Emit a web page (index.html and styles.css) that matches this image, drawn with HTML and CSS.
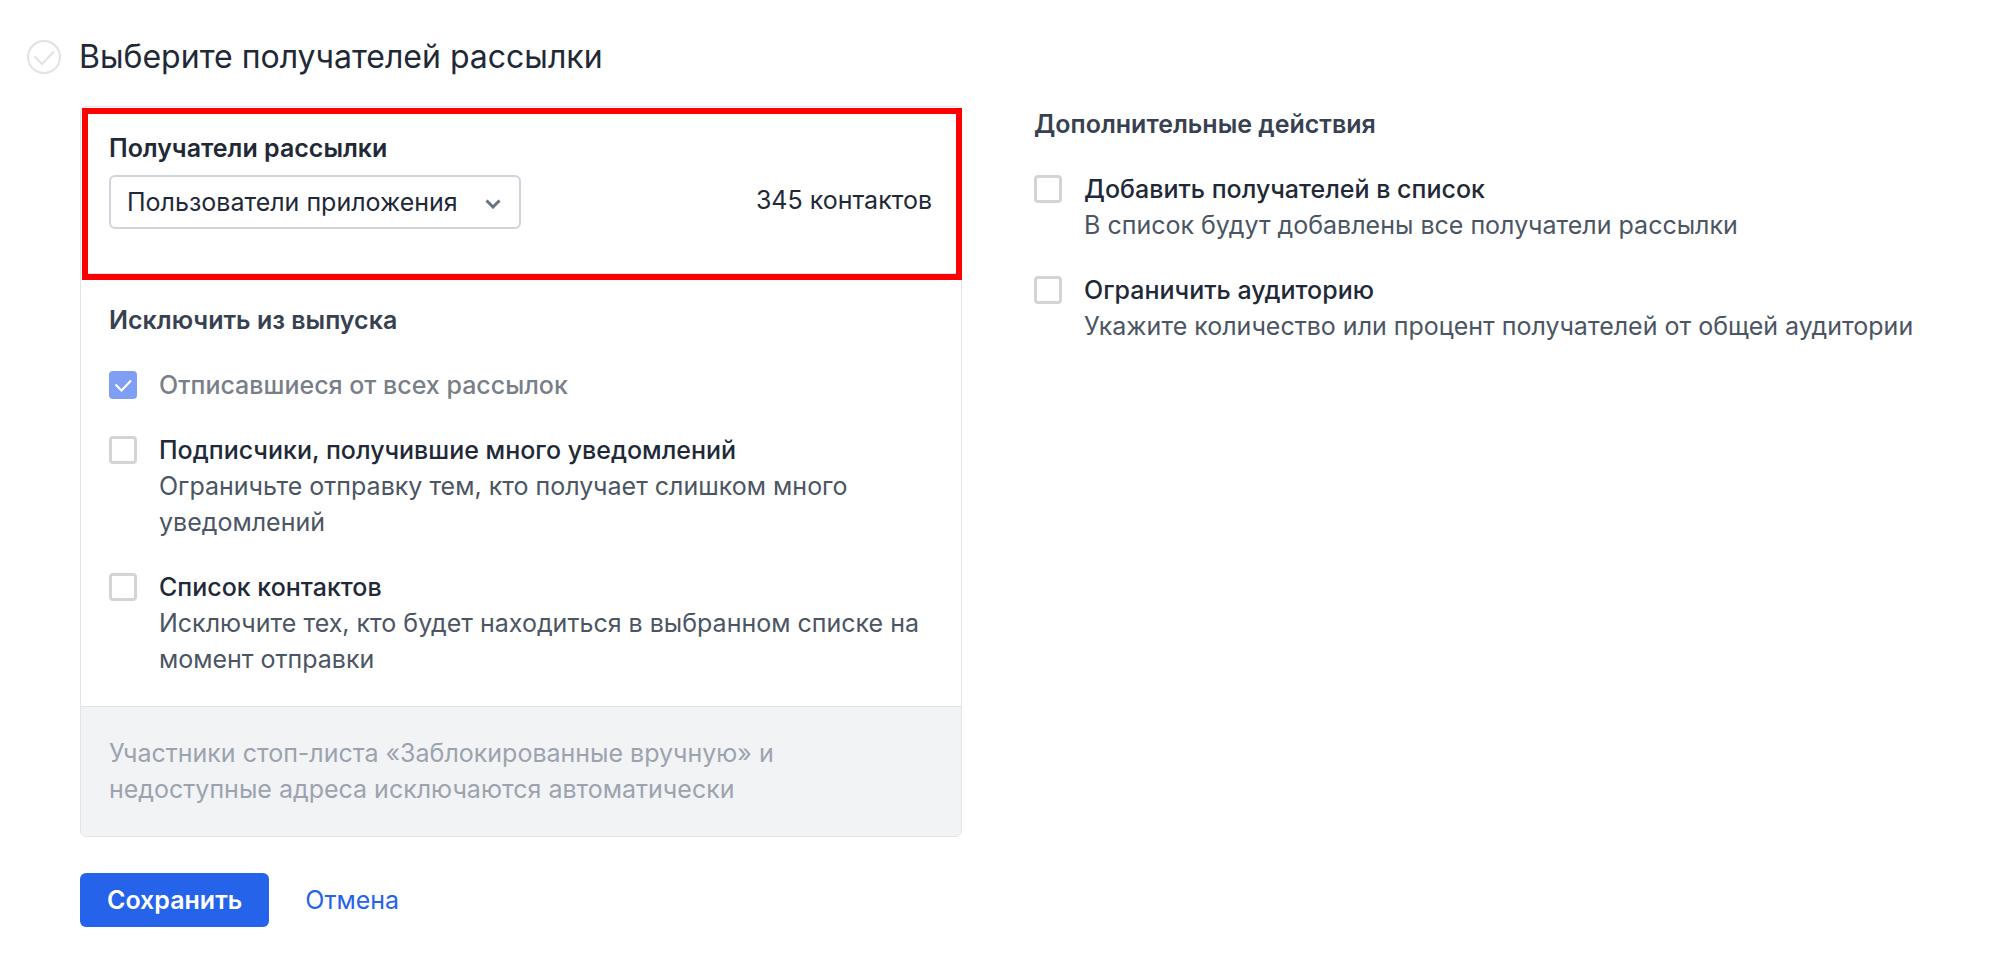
FILE: index.html
```html
<!DOCTYPE html>
<html lang="ru">
<head>
    <meta charset="UTF-8">
    <meta name="viewport" content="width=device-width, initial-scale=1.0">
    <title>Выберите получателей рассылки</title>
    <link rel="stylesheet" href="styles.css">
</head>
<body>
    <header class="step-header">
        <svg class="step-icon" viewBox="0 0 34 34" fill="none" stroke="#e2e2e2" stroke-width="2">
            <circle cx="17" cy="17" r="16"/>
            <path d="M7.500 16.500l7.500 7.500 12-12.500"/>
        </svg>
        <h1>Выберите получателей рассылки</h1>
    </header>
    <form class="step-form">
        <div class="columns">
            <div class="card">
                <section class="recipients">
                    <label class="field-label" for="segment">Получатели рассылки</label>
                    <div class="recipients-row">
                        <div class="select-box">
                            <select id="segment">
                                <option>Пользователи приложения</option>
                            </select>
                            <svg class="chevron" viewBox="0 0 16 10" fill="none" stroke="#6b7280" stroke-width="3">
                                <path d="M1.500 1.500l6.500 6.500 6.500-6.500"/>
                            </svg>
                        </div>
                        <span class="count">345 контактов</span>
                    </div>
                </section>
                <section class="exclude">
                    <h2>Исключить из выпуска</h2>
                    <div class="option disabled">
                        <input type="checkbox" id="unsubscribed" checked disabled>
                        <div>
                            <label for="unsubscribed">Отписавшиеся от всех рассылок</label>
                        </div>
                        <svg class="tick" viewBox="0 0 28 28" fill="none" stroke="#fff" stroke-width="2">
                            <path d="M6.500 13.500l6 6 9.500-10"/>
                        </svg>
                    </div>
                    <div class="option">
                        <input type="checkbox" id="frequent">
                        <div>
                            <label for="frequent">Подписчики, получившие много уведомлений</label>
                            <p>Ограничьте отправку тем, кто получает слишком много уведомлений</p>
                        </div>
                    </div>
                    <div class="option">
                        <input type="checkbox" id="contact-list">
                        <div>
                            <label for="contact-list">Список контактов</label>
                            <p>Исключите тех, кто будет находиться в выбранном списке на момент отправки</p>
                        </div>
                    </div>
                </section>
                <footer class="card-note">
                    <p>Участники стоп-листа «Заблокированные вручную» и недоступные адреса исключаются автоматически</p>
                </footer>
            </div>
            <section class="extra">
                <h2>Дополнительные действия</h2>
                <div class="option">
                    <input type="checkbox" id="add-to-list">
                    <div>
                        <label for="add-to-list">Добавить получателей в список</label>
                        <p>В список будут добавлены все получатели рассылки</p>
                    </div>
                </div>
                <div class="option">
                    <input type="checkbox" id="limit">
                    <div>
                        <label for="limit">Ограничить аудиторию</label>
                        <p>Укажите количество или процент получателей от общей аудитории</p>
                    </div>
                </div>
            </section>
        </div>
        <div class="actions">
            <button type="submit" class="save">Сохранить</button>
            <a href="#" class="cancel">Отмена</a>
        </div>
    </form>
</body>
</html>
```
FILE: styles.css
```css
* {
    box-sizing: border-box;
}
body {
    margin: 0;
    padding: 36px 28px 36px 27px;
    font-family: Inter, "Liberation Sans", sans-serif;
    font-size: 25px;
    line-height: 36px;
    color: #1f2937;
    background: #fff;
}
h1, h2, p {
    margin: 0;
}
h1 {
    font-size: 32px;
    line-height: 42px;
    font-weight: 400;
}
h2 {
    font-size: 25px;
    line-height: 36px;
    font-weight: 600;
    color: #374151;
}
.step-header {
    display: flex;
    align-items: center;
    gap: 18px;
    margin-bottom: 28px;
}
.step-icon {
    width: 34px;
    height: 34px;
    flex: none;
}
.step-form {
    padding-left: 53px;
}
.columns {
    display: grid;
    grid-template-columns: 13fr 14fr;
    gap: 72px;
    align-items: start;
}
.card {
    border: 1px solid #e2e4e8;
    border-radius: 6px;
}
.recipients {
    position: relative;
    padding: 23px 29px 44px 28px;
    border-bottom: 1px solid #e2e4e8;
}
/* red frame laid over the recipients block */
.recipients::after {
    content: "";
    position: absolute;
    top: 1px;
    right: -1px;
    bottom: -7px;
    left: 1px;
    border: 6px solid #f00;
    pointer-events: none;
}
.field-label {
    display: block;
    margin-bottom: 9px;
    font-weight: 600;
}
.recipients-row {
    display: flex;
    justify-content: space-between;
}
.select-box {
    position: relative;
}
.select-box select {
    display: block;
    width: 412px;
    height: 54px;
    padding: 0 50px 0 16px;
    border: 2px solid #d1d5db;
    border-radius: 6px;
    background: #fff;
    color: inherit;
    font: inherit;
    appearance: none;
}
.chevron {
    position: absolute;
    top: 24px;
    right: 20px;
    width: 16px;
    height: 10px;
    pointer-events: none;
}
.count {
    line-height: 50px;
}
.exclude, .extra {
    display: flex;
    flex-direction: column;
    gap: 29px;
}
.exclude {
    padding: 28px 28px 29px;
}
.option {
    position: relative;
    display: flex;
    gap: 22px;
}
.option input {
    appearance: none;
    flex: none;
    width: 28px;
    height: 28px;
    margin: 4px 0 0;
    border: 3px solid #d4d4d8;
    border-radius: 4px;
    background: #fff;
}
.option label {
    display: block;
    font-weight: 500;
}
.option p {
    color: #4b5563;
}
.option.disabled input {
    border-color: #7f9ff5;
    background: #7f9ff5;
}
.option.disabled label {
    color: #797f88;
}
.tick {
    position: absolute;
    top: 4px;
    left: 0;
    width: 28px;
    height: 28px;
    pointer-events: none;
}
.card-note {
    padding: 28px 28px 29px;
    border-top: 1px solid #e2e4e8;
    border-radius: 0 0 5px 5px;
    background: #f2f3f5;
    color: #9ca3af;
}
.actions {
    display: flex;
    align-items: center;
    gap: 36px;
    margin-top: 36px;
}
.save {
    height: 54px;
    padding: 0 27px;
    border: 0;
    border-radius: 6px;
    background: #2563eb;
    color: #fff;
    font: inherit;
    font-weight: 600;
    cursor: pointer;
}
.cancel {
    color: #2563eb;
    text-decoration: none;
}
```
